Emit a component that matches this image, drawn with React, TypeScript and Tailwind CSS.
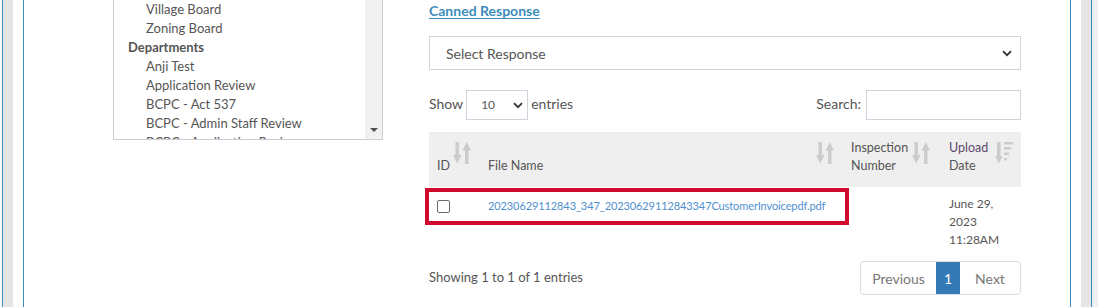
import React from "react";

const SortBoth = () => (
  <svg width="18" height="22" viewBox="0 0 18 22" fill="#cccccc">
    <rect x="2.5" y="0" width="3.5" height="14" />
    <polygon points="0,13 8.5,13 4.25,21.5" />
    <polygon points="9.5,8.5 18,8.5 13.75,0" />
    <rect x="12" y="7" width="3.5" height="15" />
  </svg>
);

const SortDesc = () => (
  <svg width="18" height="22" viewBox="0 0 18 22" fill="#cccccc">
    <rect x="2" y="0" width="3.5" height="15" />
    <polygon points="0,14 7.5,14 3.75,21.5" />
    <rect x="9" y="0" width="9" height="2.5" />
    <rect x="9" y="5" width="7" height="2.5" />
    <rect x="9" y="10.5" width="5" height="2.5" />
    <rect x="9" y="16" width="3" height="2.5" />
  </svg>
);

const Chevron = () => (
  <svg width="10" height="7" viewBox="0 0 10 7">
    <path d="M1 1.2 L5 5.2 L9 1.2" fill="none" stroke="#333" strokeWidth="1.8" />
  </svg>
);

export default function App() {
  const items: { t: string; b?: boolean }[] = [
    { t: "Village Board" },
    { t: "Zoning Board" },
    { t: "Departments", b: true },
    { t: "Anji Test" },
    { t: "Application Review" },
    { t: "BCPC - Act 537" },
    { t: "BCPC - Admin Staff Review" },
    { t: "BCPC - Application Review" },
  ];
  return (
    <div
      className="flex h-[307px] w-[1098px] overflow-hidden bg-white text-[#555]"
      style={{ fontFamily: "Lato, 'Liberation Sans', sans-serif" }}
    >
      <div className="ml-[2px] h-full w-[1090px] border-x border-[#3c8dbc] bg-[#e5e5e5] px-[10px]">
        <div className="h-full bg-white px-[10px]">
          <div className="flex h-full border-x border-[#3c8dbc]">
            {/* left column */}
            <div className="ml-[89px] w-[270px] shrink-0">
              <div className="relative h-[140px] overflow-hidden border-x border-b border-[#cdcdd8] bg-white">
                <div className="pr-[18px]">
                  {items.map((it, i) => (
                    <div
                      key={i}
                      className={
                        "h-[19px] whitespace-nowrap text-[13px] leading-[19px] " +
                        (it.b ? "pl-[14px] font-bold text-[#555]" : "pl-[32px]")
                      }
                    >
                      {it.t}
                    </div>
                  ))}
                </div>
                <div className="absolute right-0 top-0 flex h-full w-[17px] flex-col justify-end bg-[#f1f1f1] pb-[7px]">
                  <div className="mx-auto h-0 w-0 border-x-[4px] border-t-[4px] border-x-transparent border-t-[#505050]" />
                </div>
              </div>
            </div>

            {/* right column */}
            <div className="ml-[46px] w-[592px] shrink-0">
              <div className="h-[21px] pt-[1px] text-[14px] font-bold leading-[20px] text-[#3c8dbc] underline underline-offset-2">
                Canned Response
              </div>
              <div className="mt-[15px] flex h-[34px] items-center justify-between border border-[#cfd3dc] pl-[16px] pr-[8px] text-[14px]">
                <span>Select Response</span>
                <Chevron />
              </div>

              <div className="mt-[20px] flex h-[30px] items-center justify-between text-[14px]">
                <div className="flex items-center">
                  <span className="-mt-[3px]">Show</span>
                  <div className="ml-[3px] flex h-[30px] w-[62px] items-center justify-between border border-[#cfd3dc] pl-[14px] pr-[4px] text-[12px]">
                    <span>10</span>
                    <Chevron />
                  </div>
                  <span className="ml-[3px] -mt-[3px]">entries</span>
                </div>
                <div className="flex items-center">
                  <span className="-mt-[3px]">Search:</span>
                  <div className="ml-[5px] h-[30px] w-[155px] border border-[#cfd3dc]" />
                </div>
              </div>

              {/* table */}
              <div className="relative mt-[12px]">
                <div className="flex h-[55px] bg-[#efefef] text-[12.5px] leading-[18px]">
                  <div className="flex w-[51px] justify-between pb-[12px] pl-[8px] pr-[9px] pt-[10px]">
                    <span className="self-end">ID</span>
                    <SortBoth />
                  </div>
                  <div className="flex w-[363px] justify-between pb-[12px] pl-[8px] pr-[9px] pt-[10px]">
                    <span className="self-end">File Name</span>
                    <SortBoth />
                  </div>
                  <div className="flex w-[98px] justify-between pb-[12px] pl-[8px] pr-[11px] pt-[10px]">
                    <span className="self-end">
                      Inspection
                      <br />
                      Number
                    </span>
                    <SortBoth />
                  </div>
                  <div className="flex w-[80px] justify-between pb-[12px] pl-[8px] pr-[8px] pt-[10px]">
                    <span className="self-end">
                      <span className="text-[#5e4a70]">Upload</span>
                      <br />
                      Date
                    </span>
                    <SortDesc />
                  </div>
                </div>
                <div className="flex h-[67px] text-[12px]">
                  <div className="w-[51px] pl-[8px] pt-[13px]">
                    <div className="h-[13px] w-[13px] rounded-[2px] border border-[#6b6b6b] bg-white" />
                  </div>
                  <div className="w-[363px] whitespace-nowrap pl-[8px] pt-[10px] text-[11px] leading-[18px] tracking-[-0.1px] text-[#4f8fcf]">
                    20230629112843_347_20230629112843347CustomerInvoicepdf.pdf
                  </div>
                  <div className="w-[98px]" />
                  <div className="w-[80px] pl-[8px] pt-[8px] leading-[18px]">
                    June 29,
                    <br />
                    2023
                    <br />
                    11:28AM
                  </div>
                </div>
                <div className="pointer-events-none absolute left-[-4px] top-[56px] h-[37px] w-[424px] border-[4px] border-[#cf0a2c]" />
              </div>

              <div className="mt-[7px] flex items-center justify-between">
                <span className="text-[13px]">Showing 1 to 1 of 1 entries</span>
                <div className="flex h-[34px] overflow-hidden rounded-[4px] border border-[#dddddd] text-[14px]">
                  <div className="flex w-[75px] items-center justify-center text-[#777]">Previous</div>
                  <div className="flex w-[24px] items-center justify-center bg-[#337ab7] text-white">1</div>
                  <div className="flex w-[60px] items-center justify-center text-[#777]">Next</div>
                </div>
              </div>
            </div>
          </div>
        </div>
      </div>
      <div className="flex-1 bg-[#ecf0f5]" />
    </div>
  );
}
